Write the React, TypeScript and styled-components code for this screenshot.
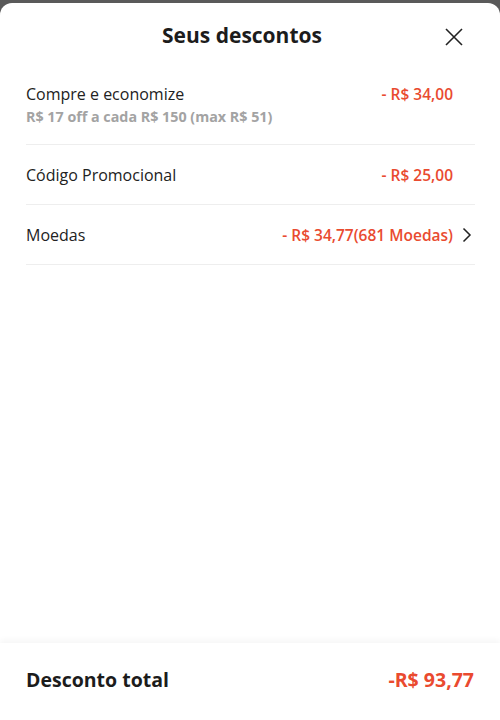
import React from "react";
import styled, { createGlobalStyle } from "styled-components";

const Global = createGlobalStyle`
	html, body {
		margin: 0;
		padding: 0;
		background: #5a5a5a;
	}
	* { box-sizing: border-box; }
`;

type Discount = {
	label: string;
	note?: string;
	value: string;
	link?: boolean;
};

const discounts: Discount[] = [
	{
		label: "Compre e economize",
		note: "R$ 17 off a cada R$ 150 (max R$ 51)",
		value: "- R$ 34,00",
	},
	{ label: "Código Promocional", value: "- R$ 25,00" },
	{ label: "Moedas", value: "- R$ 34,77(681 Moedas)", link: true },
];

export default function App() {
	return (
		<>
			<Global />
			<Sheet>
				<Header>
					<Title>Seus descontos</Title>
					<Close aria-label='Fechar'>
						<svg width='18' height='18' viewBox='0 0 18 18'>
							<path d='M1 1L17 17M17 1L1 17' stroke='#222' strokeWidth='1.6' fill='none' />
						</svg>
					</Close>
				</Header>
				<List>
					{discounts.map((d) => (
						<Row key={d.label}>
							<Info>
								<Label>{d.label}</Label>
								{d.note && <Note>{d.note}</Note>}
							</Info>
							<Value>{d.value}</Value>
							<Chevron>
								{d.link && (
									<svg width='10' height='16' viewBox='0 0 10 16'>
										<path d='M1.5 1.5L8 8L1.5 14.5' stroke='#222' strokeWidth='1.5' fill='none' />
									</svg>
								)}
							</Chevron>
						</Row>
					))}
				</List>
				<Footer>
					<TotalLabel>Desconto total</TotalLabel>
					<TotalValue>-R$ 93,77</TotalValue>
				</Footer>
			</Sheet>
		</>
	);
}

const Sheet = styled.div`
	margin-top: 3px;
	height: 717px;
	background: #fff;
	border-radius: 12px 12px 0 0;
	display: flex;
	flex-direction: column;
	font-family: "Open Sans", "Noto Sans", sans-serif;
	color: #222;
`;
const Header = styled.div`
	position: relative;
	height: 64px;
	display: flex;
	align-items: center;
	justify-content: center;
	padding-right: 16px;
`;
const Title = styled.h1`
	margin: 0;
	font-size: 21px;
	font-weight: 700;
	color: #1c1c1c;
`;
const Close = styled.button`
	position: absolute;
	right: 37px;
	top: 25px;
	border: 0;
	padding: 0;
	background: none;
	display: flex;
`;
const List = styled.div`
	flex: 1;
	padding: 0 25px 0 26px;
`;
const Row = styled.div`
	display: flex;
	align-items: flex-start;
	padding: 18px 0 17px;
	border-bottom: 1px solid #eeeeee;
	&:first-child {
		padding-top: 15px;
	}
`;
const Info = styled.div`
	flex: 1;
	display: flex;
	flex-direction: column;
	gap: 1px;
`;
const Label = styled.span`
	font-size: 16px;
	line-height: 24px;
	color: #222;
`;
const Note = styled.span`
	font-size: 14.3px;
	line-height: 20px;
	font-weight: 700;
	color: #a3a3a3;
`;
const Value = styled.span`
	font-size: 15.5px;
	line-height: 24px;
	font-weight: 600;
	color: #e94b30;
`;
const Chevron = styled.span`
	width: 22px;
	height: 24px;
	display: flex;
	align-items: center;
	justify-content: flex-end;
	padding-right: 3px;
`;
const Footer = styled.div`
	height: 77px;
	display: flex;
	align-items: center;
	justify-content: space-between;
	padding: 0 26px 4px;
	box-shadow: 0 -3px 6px rgba(0, 0, 0, 0.04);
`;
const TotalLabel = styled.span`
	font-size: 19.5px;
	font-weight: 700;
	color: #1c1c1c;
`;
const TotalValue = styled.span`
	font-size: 19.5px;
	font-weight: 700;
	color: #ea4a2f;
`;
